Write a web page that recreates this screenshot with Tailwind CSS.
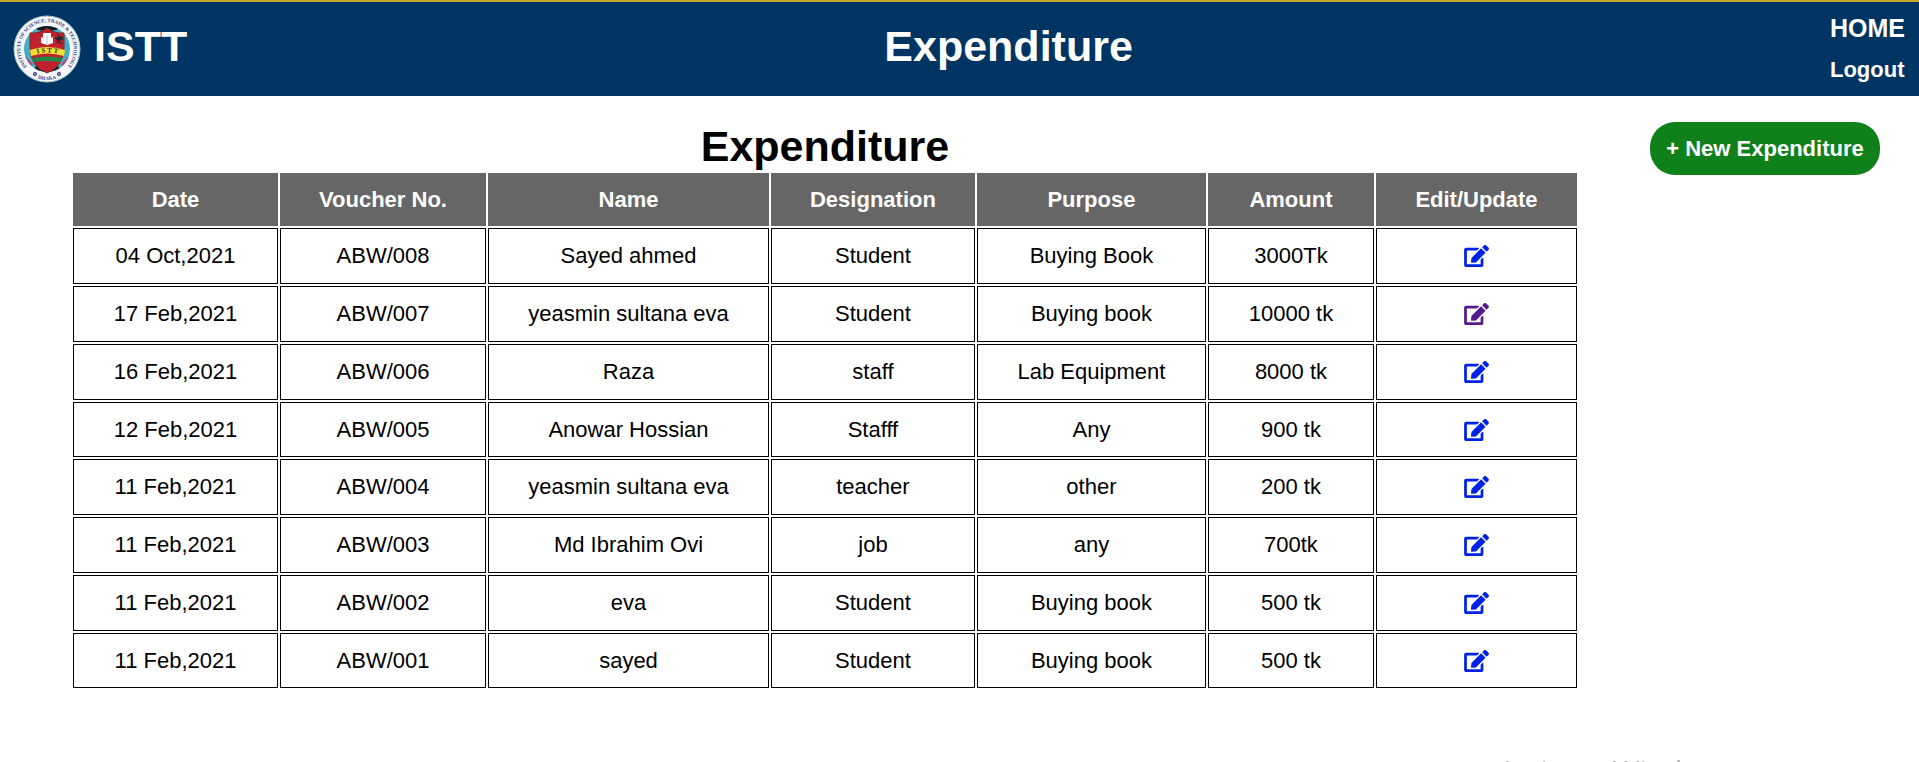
<!DOCTYPE html>
<html lang="en">
<head>
<meta charset="utf-8">
<meta name="viewport" content="width=device-width, initial-scale=1">
<title>ISTT - Expenditure</title>
<script src="https://cdn.jsdelivr.net/npm/@tailwindcss/browser@4"></script>
</head>
<body class="min-h-screen bg-white font-['Liberation_Sans',Arial,sans-serif] text-black">

<svg class="hidden" aria-hidden="true">
  <symbol id="edit" viewBox="0 0 576 512">
    <path fill="currentColor" d="M402.6 83.2l90.2 90.2c3.8 3.8 3.8 10 0 13.8L274.4 405.6l-92.8 10.3c-12.4 1.4-22.9-9.1-21.5-21.5l10.3-92.8L388.8 83.2c3.8-3.8 10-3.8 13.8 0zm162-22.9l-48.8-48.8c-15.2-15.2-39.9-15.2-55.2 0l-35.4 35.4c-3.8 3.8-3.8 10 0 13.8l90.2 90.2c3.8 3.8 10 3.8 13.8 0l35.4-35.4c15.2-15.3 15.2-40 0-55.2zM384 346.2V448H64V128h229.8c3.2 0 6.2-1.3 8.5-3.5l40-40c7.6-7.6 2.2-20.5-8.5-20.5H48C21.5 64 0 85.5 0 112v352c0 26.5 21.5 48 48 48h352c26.5 0 48-21.5 48-48V306.2c0-10.7-12.9-16-20.5-8.5l-40 40c-2.2 2.3-3.5 5.3-3.5 8.5z"/>
  </symbol>
</svg>

<header class="flex h-24 items-center justify-between border-t-2 border-[#c9a530] bg-[#003462] pr-3.5 pl-3 font-bold text-white">
  <a href="#" class="flex items-center gap-3">
    <svg class="size-[70px]" viewBox="0 0 70 70" role="img" aria-label="Institute of Science, Trade &amp; Technology, Dhaka">
      <defs>
        <path id="ring" d="M20.800 57.700 A26.800 26.800 0 1 1 49.200 57.700"/>
        <path id="ringBottom" d="M20 62 A31 31 0 0 0 50 62"/>
        <path id="banner" d="M20 41 Q35 36 51 41"/>
        <clipPath id="disc"><circle cx="35" cy="35" r="23"/></clipPath>
      </defs>
      <circle cx="35" cy="35" r="33" fill="#f4f7f8" stroke="#a9c9cc" stroke-width="1"/>
      <g clip-path="url(#disc)">
        <rect x="12" y="12" width="46" height="46" fill="#46adc4"/>
        <path d="M18 12H52L44 16Q35 18 26 16z" fill="#101820"/>
        <path d="M20 58L25 51H45L50 58z" fill="#182026"/>
        <path d="M12 43L20 51M58 43L50 51" stroke="#b7487a" stroke-width="3"/>
      </g>
      <path d="M18 19Q27 20 35 14Q43 20 52 19V34Q51 53 35 59Q19 53 18 34z" fill="#c1202d" stroke="#7b2732" stroke-width="1"/>
      <path d="M31 19H39V26L35 28L31 26z" fill="#fff"/>
      <path d="M29 23L35 25.500L41 23V29L35 31L29 29z" fill="#fff"/>
      <path d="M35 21V30" stroke="#b9a0a4" stroke-width=".7"/>
      <path d="M43 24L49 22L51 25L46 27zM46 20L48 29M44 28L50 30" fill="#282c30" stroke="#282c30" stroke-width="1"/>
      <path d="M18 36Q35 30 53 36L52 42Q35 37 19 42z" fill="#f4dc31"/>
      <path d="M20 44Q35 41 50 44L48 48Q35 46 22 48z" fill="#218646"/>
      <text class="text-[7px] font-bold" font-family="Liberation Serif, serif" fill="#2a2a1c" text-anchor="middle"><textPath href="#banner" startOffset="50%">I S T T</textPath></text>
      <text class="text-[5px] font-bold" font-family="Liberation Serif, serif" fill="#363a83" text-anchor="middle"><textPath href="#ring" startOffset="50%">INSTITUTE OF SCIENCE, TRADE &amp; TECHNOLOGY</textPath></text>
      <text class="text-[5px] font-bold" font-family="Liberation Serif, serif" fill="#363a83" text-anchor="middle"><textPath href="#ringBottom" startOffset="50%">DHAKA</textPath></text>
      <g fill="#f4f7f8" stroke="#343878" stroke-width="1.300"><circle cx="23" cy="60" r="1.400"/><circle cx="47" cy="60" r="1.400"/></g>
    </svg>
    <span class="pb-1.5 text-[43px] leading-[50px]">ISTT</span>
  </a>
  <div class="pb-1.5 text-[43px] leading-[50px]">Expenditure</div>
  <nav class="flex flex-col gap-0.5">
    <a href="#" class="text-[25px] leading-10">HOME</a>
    <a href="#" class="text-[22px] leading-10">Logout</a>
  </nav>
</header>

<main class="flex items-start pt-[25px] pl-[71px]">
  <section class="flex-1">
    <h1 class="text-center text-[43px] leading-[50px] font-bold">Expenditure</h1>
    <table class="w-full table-fixed border-separate border-spacing-[2px] text-center text-[22px] leading-6 [&_td]:h-14 [&_td]:border [&_td]:border-black [&_tr:nth-child(4n)_td]:h-[55px] [&_th]:h-[53px] [&_th]:bg-[#666666] [&_th]:text-white [&_svg]:mx-auto [&_svg]:h-[22px] [&_svg]:w-[25px]">
      <colgroup>
        <col class="w-[13.74%]"><col class="w-[13.81%]"><col class="w-[18.83%]"><col class="w-[13.67%]"><col class="w-[15.35%]"><col class="w-[11.13%]"><col class="w-[13.47%]">
      </colgroup>
      <thead>
        <tr><th scope="col">Date</th><th scope="col">Voucher No.</th><th scope="col">Name</th><th scope="col">Designation</th><th scope="col">Purpose</th><th scope="col">Amount</th><th scope="col">Edit/Update</th></tr>
      </thead>
      <tbody>
        <tr><td>04 Oct,2021</td><td>ABW/008</td><td>Sayed ahmed</td><td>Student</td><td>Buying Book</td><td>3000Tk</td><td><a href="#" aria-label="Edit ABW/008" class="text-[#0022e6]"><svg><use href="#edit"/></svg></a></td></tr>
        <tr><td>17 Feb,2021</td><td>ABW/007</td><td>yeasmin sultana eva</td><td>Student</td><td>Buying book</td><td>10000 tk</td><td><a href="#" aria-label="Edit ABW/007" class="text-[#551a8b]"><svg><use href="#edit"/></svg></a></td></tr>
        <tr><td>16 Feb,2021</td><td>ABW/006</td><td>Raza</td><td>staff</td><td>Lab Equipment</td><td>8000 tk</td><td><a href="#" aria-label="Edit ABW/006" class="text-[#0022e6]"><svg><use href="#edit"/></svg></a></td></tr>
        <tr><td>12 Feb,2021</td><td>ABW/005</td><td>Anowar Hossian</td><td>Stafff</td><td>Any</td><td>900 tk</td><td><a href="#" aria-label="Edit ABW/005" class="text-[#0022e6]"><svg><use href="#edit"/></svg></a></td></tr>
        <tr><td>11 Feb,2021</td><td>ABW/004</td><td>yeasmin sultana eva</td><td>teacher</td><td>other</td><td>200 tk</td><td><a href="#" aria-label="Edit ABW/004" class="text-[#0022e6]"><svg><use href="#edit"/></svg></a></td></tr>
        <tr><td>11 Feb,2021</td><td>ABW/003</td><td>Md Ibrahim Ovi</td><td>job</td><td>any</td><td>700tk</td><td><a href="#" aria-label="Edit ABW/003" class="text-[#0022e6]"><svg><use href="#edit"/></svg></a></td></tr>
        <tr><td>11 Feb,2021</td><td>ABW/002</td><td>eva</td><td>Student</td><td>Buying book</td><td>500 tk</td><td><a href="#" aria-label="Edit ABW/002" class="text-[#0022e6]"><svg><use href="#edit"/></svg></a></td></tr>
        <tr><td>11 Feb,2021</td><td>ABW/001</td><td>sayed</td><td>Student</td><td>Buying book</td><td>500 tk</td><td><a href="#" aria-label="Edit ABW/001" class="text-[#0022e6]"><svg><use href="#edit"/></svg></a></td></tr>
      </tbody>
    </table>
  </section>
  <aside class="pt-px pr-[39px] pl-[71px]">
    <button type="button" class="h-[53px] w-[230px] rounded-[25px] bg-[#0f801a] text-[22px] leading-6 font-bold whitespace-nowrap text-white">+ New Expenditure</button>
  </aside>
</main>

<!-- System notice that starts at the lower edge of the window -->
<div class="fixed right-0 bottom-0 h-1.5 w-[421px] overflow-hidden font-['Open_Sans',sans-serif] text-[29px] leading-[29px] whitespace-nowrap text-[#b0b0b0]">Activate Windows</div>

</body>
</html>
